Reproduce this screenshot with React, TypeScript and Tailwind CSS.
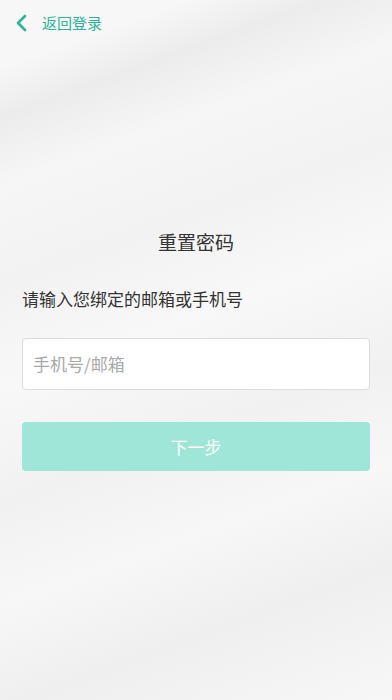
import React from 'react';

const font = { fontFamily: '"Noto Sans CJK SC", "Noto Sans", sans-serif' };

export default function App() {
  return (
    <div
      className="min-h-[700px] w-full bg-[#f3f3f3] bg-[linear-gradient(160deg,#f7f7f7_0%,#f7f7f7_8%,#ececec_14%,#f6f6f6_22%,#f2f2f2_34%,#f8f8f8_46%,#f1f1f1_60%,#f7f7f7_72%,#efefef_84%,#f7f7f7_100%)]"
      style={font}
    >
      <div className="flex h-[45px] items-center pl-[15px]">
        <svg width="13" height="18" viewBox="0 0 13 18" className="mr-[14px]">
          <path d="M10 2 L3 9 L10 16" fill="none" stroke="#2bb39b" strokeWidth="2.6" strokeLinecap="round" strokeLinejoin="round" />
        </svg>
        <span className="text-[15px] leading-none text-[#2bb39b]">返回登录</span>
      </div>

      <div className="px-[22px] pt-[184px]">
        <h1 className="text-center text-[19px] leading-[26px] text-[#333]">重置密码</h1>
        <p className="mt-[32px] text-[17px] leading-[24px] text-[#333]">请输入您绑定的邮箱或手机号</p>
        <div className="mt-[27px] flex h-[52px] items-center rounded-[4px] border border-[#dcdcdc] bg-white px-[10px]">
          <input
            className="w-full bg-transparent text-[17px] text-[#333] outline-none placeholder:text-[#a8a8a8]"
            placeholder="手机号/邮箱"
            style={font}
          />
        </div>
        <button
          className="mt-[32px] flex h-[49px] w-full items-center justify-center rounded-[4px] bg-[#a0e6d8] text-[17px] text-white"
          style={font}
        >
          下一步
        </button>
      </div>
    </div>
  );
}
